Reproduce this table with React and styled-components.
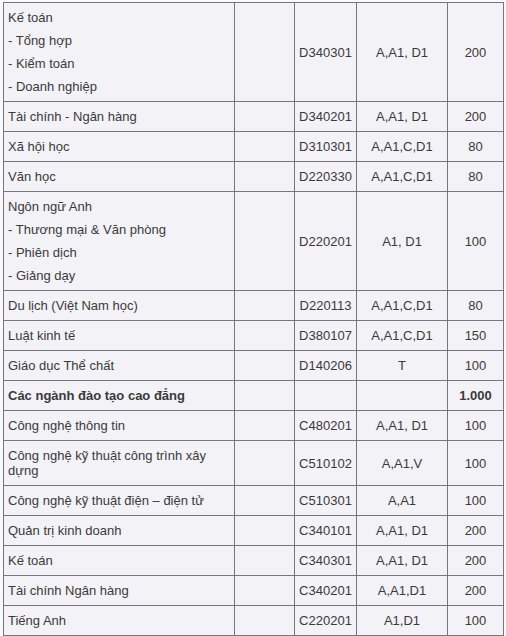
import styled, { createGlobalStyle } from "styled-components";

const GlobalStyle = createGlobalStyle`
  html, body {
    margin: 0;
    padding: 0;
    background: #fafafc;
  }
  body {
    font-family: "Liberation Sans", Arial, sans-serif;
  }
`;

const Page = styled.div`
  padding: 2px 3px 0 3px;
  width: 500px;
`;

const Table = styled.table`
  width: 500px;
  table-layout: fixed;
  border-collapse: collapse;
  font-size: 13px;
  line-height: 15px;
  color: #3a3a3a;
`;

const Col = styled.col`
  width: ${({ $w }) => $w}px;
`;

const Row = styled.tr`
  background: #f3f2f7;
`;

const Cell = styled.td`
  border: 1px solid #77767c;
  padding: 7px 4px;
  vertical-align: middle;
  text-align: ${({ $align }) => $align || "left"};
  font-weight: ${({ $bold }) => ($bold ? "bold" : "normal")};
`;

const Line = styled.p`
  margin: 0 0 8px 0;
  &:last-child {
    margin-bottom: 0;
  }
`;

const widths = [231, 60, 62, 91, 56];

const rows = [
  { name: ["Kế toán", "- Tổng hợp", "- Kiểm toán", "- Doanh nghiệp"], code: "D340301", groups: "A,A1, D1", quota: "200" },
  { name: ["Tài chính - Ngân hàng"], code: "D340201", groups: "A,A1, D1", quota: "200" },
  { name: ["Xã hội học"], code: "D310301", groups: "A,A1,C,D1", quota: "80" },
  { name: ["Văn học"], code: "D220330", groups: "A,A1,C,D1", quota: "80" },
  { name: ["Ngôn ngữ Anh", "- Thương mại & Văn phòng", "- Phiên dịch", "- Giảng dạy"], code: "D220201", groups: "A1, D1", quota: "100" },
  { name: ["Du lịch (Việt Nam học)"], code: "D220113", groups: "A,A1,C,D1", quota: "80" },
  { name: ["Luật kinh tế"], code: "D380107", groups: "A,A1,C,D1", quota: "150" },
  { name: ["Giáo dục Thể chất"], code: "D140206", groups: "T", quota: "100" },
  { name: ["Các ngành đào tạo cao đẳng"], code: "", groups: "", quota: "1.000", bold: true },
  { name: ["Công nghệ thông tin"], code: "C480201", groups: "A,A1, D1", quota: "100" },
  { name: ["Công nghệ kỹ thuật công trình xây dựng"], code: "C510102", groups: "A,A1,V", quota: "100" },
  { name: ["Công nghệ kỹ thuật điện – điện tử"], code: "C510301", groups: "A,A1", quota: "100" },
  { name: ["Quản trị kinh doanh"], code: "C340101", groups: "A,A1, D1", quota: "200" },
  { name: ["Kế toán"], code: "C340301", groups: "A,A1, D1", quota: "200" },
  { name: ["Tài chính Ngân hàng"], code: "C340201", groups: "A,A1,D1", quota: "200" },
  { name: ["Tiếng Anh"], code: "C220201", groups: "A1,D1", quota: "100" },
];

const App = () => {
  return (
    <Page>
      <GlobalStyle />
      <Table>
        <colgroup>
          {widths.map((w, i) => (
            <Col key={i} $w={w} />
          ))}
        </colgroup>
        <tbody>
          {rows.map((r, i) => (
            <Row key={i}>
              <Cell $bold={r.bold}>
                {r.name.length > 1
                  ? r.name.map((n, j) => <Line key={j}>{n}</Line>)
                  : r.name[0]}
              </Cell>
              <Cell />
              <Cell $align="center">{r.code}</Cell>
              <Cell $align="center">{r.groups}</Cell>
              <Cell $align="center" $bold={r.bold}>{r.quota}</Cell>
            </Row>
          ))}
        </tbody>
      </Table>
    </Page>
  );
};

export default App;
